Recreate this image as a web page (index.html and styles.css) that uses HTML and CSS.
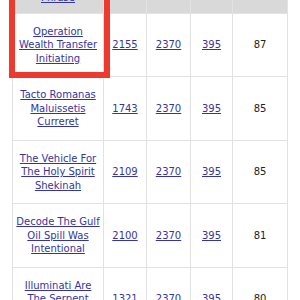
FILE: index.html
```html
<!DOCTYPE html>
<html>
<head>
<meta charset="utf-8">
<link rel="stylesheet" href="styles.css">
</head>
<body>
<div class="wrap">
  <table class="results">
    <colgroup>
      <col class="c1"><col class="c2"><col class="c3"><col class="c4"><col class="c5">
    </colgroup>
    <thead>
      <tr><th><a href="#">Phrase</a></th><th></th><th></th><th></th><th></th></tr>
    </thead>
    <tbody>
      <tr><td><a href="#">Operation Wealth Transfer Initiating</a></td><td><a href="#">2155</a></td><td><a href="#">2370</a></td><td><a href="#">395</a></td><td>87</td></tr>
      <tr><td><a href="#">Tacto Romanas Maluissetis Curreret</a></td><td><a href="#">1743</a></td><td><a href="#">2370</a></td><td><a href="#">395</a></td><td>85</td></tr>
      <tr><td><a href="#">The Vehicle For The Holy Spirit Shekinah</a></td><td><a href="#">2109</a></td><td><a href="#">2370</a></td><td><a href="#">395</a></td><td>85</td></tr>
      <tr><td><a href="#">Decode The Gulf Oil Spill Was Intentional</a></td><td><a href="#">2100</a></td><td><a href="#">2370</a></td><td><a href="#">395</a></td><td>81</td></tr>
      <tr><td><a href="#">Illuminati Are The Serpent Seed</a></td><td><a href="#">1321</a></td><td><a href="#">2370</a></td><td><a href="#">395</a></td><td>80</td></tr>
    </tbody>
  </table>
  <div class="highlight"></div>
</div>
</body>
</html>
```
FILE: styles.css
```css
html, body {
  margin: 0;
  padding: 0;
  background: #ffffff;
}
body {
  font-family: "DejaVu Sans", Verdana, sans-serif;
  font-size: 10px;
  line-height: 13.5px;
  color: #222222;
}
.wrap {
  position: relative;
  padding-left: 12px;
  height: 300px;
  overflow: hidden;
}
.results {
  table-layout: fixed;
  width: 276px;
  border-collapse: collapse;
  margin-top: -18px;
}
.c1 { width: 91px; }
.c2 { width: 43px; }
.c3 { width: 44px; }
.c4 { width: 42px; }
.c5 { width: 55px; }
.results th,
.results td {
  border: 1px solid #e2e2e2;
  text-align: center;
  vertical-align: middle;
  padding: 11px 3px;
}
.results th {
  background: #d9d9d9;
  padding: 8px 3px;
  font-weight: normal;
}
.results a {
  color: #35359e;
  text-decoration: underline;
}
.highlight {
  position: absolute;
  left: 9px;
  top: -10px;
  width: 89px;
  height: 76px;
  border: 6px solid #ee3a2e;
}
```
